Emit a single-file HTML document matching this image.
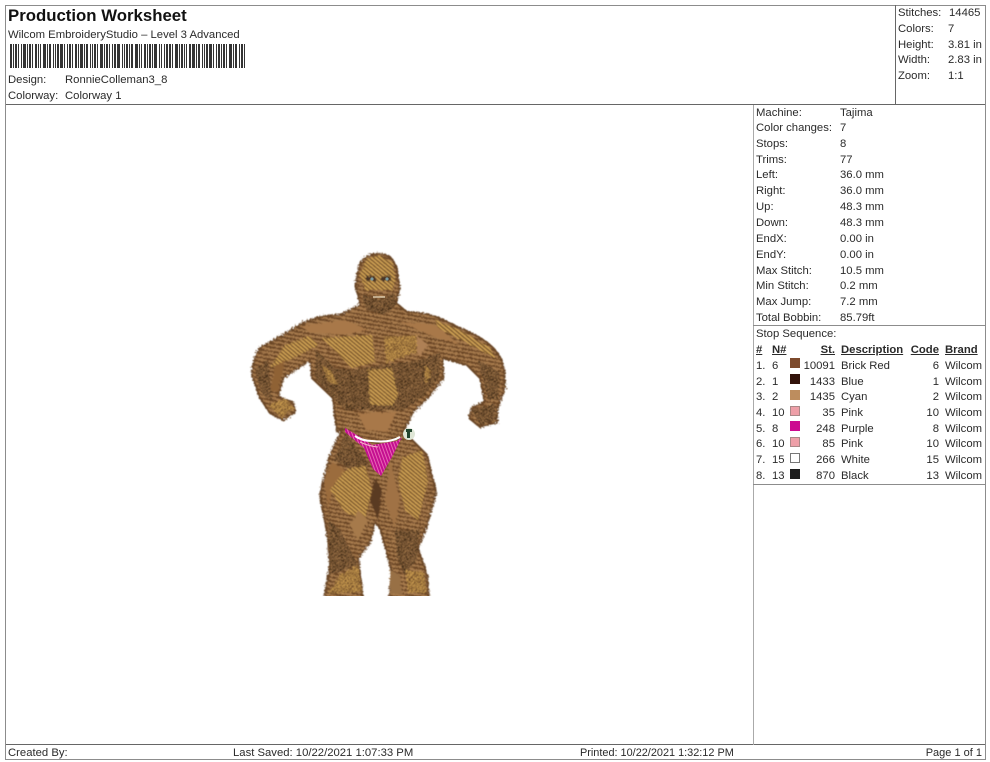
<!DOCTYPE html>
<html><head><meta charset="utf-8"><style>
html,body{margin:0;padding:0;background:#fff}
#p{position:relative;width:990px;height:762px;overflow:hidden;background:#fff;font:11.3px/18px "Liberation Sans",sans-serif;color:#2a2a2a;filter:blur(.3px)}
#p span{position:absolute;white-space:nowrap;margin-top:1px}
#p span.h{margin-top:0}
.l{position:absolute;background:#8c8c8c}
.r{text-align:right}
.u{font-weight:bold;text-decoration:underline}
.s{position:absolute;width:10px;height:10px;box-sizing:border-box}
svg{position:absolute;left:0;top:0}
</style></head><body><div id="p">
<div class="l" style="left:5px;top:5px;width:980px;height:1px"></div>
<div class="l" style="left:5px;top:104px;width:980px;height:1px;background:#666"></div>
<div class="l" style="left:5px;top:744px;width:980px;height:1px;background:#666"></div>
<div class="l" style="left:5px;top:759px;width:980px;height:1px"></div>
<div class="l" style="left:5px;top:5px;width:1px;height:755px"></div>
<div class="l" style="left:985px;top:5px;width:1px;height:755px"></div>
<div class="l" style="left:895px;top:5px;width:1px;height:100px;background:#666"></div>
<div class="l" style="left:753px;top:105px;width:1px;height:640px;background:#aaa"></div>
<div class="l" style="left:753px;top:325px;width:232px;height:1px"></div>
<div class="l" style="left:753px;top:484px;width:232px;height:1px"></div>

<span style="left:8px;top:5px;font:bold 16.8px/20px 'Liberation Sans',sans-serif;color:#111">Production Worksheet</span>
<span class="h" style="left:8px;top:26px">Wilcom EmbroideryStudio – Level 3 Advanced</span>
<svg width="260" height="75" style="left:0;top:0"><g stroke="#333" fill="none" stroke-width="24">
<line x1="10" y1="56" x2="245" y2="56" stroke-dasharray="2 1 1 1 2 1 1 2 1 1 3 1 1 1 2 1 1 2 2 1 1 1 1 2 3 1 1 1 2 2 1 1 1 1 2 1 3 1 1 2 1 1 2 1 1 2 2 1 1 1 3 1 1 1 2 2 1 1 1 1 2 1 1 2 3 1 1 1 2 1 1 2 1 1 2 1 3 2 1 1 1 1 2 1 1 1 2 2 3 1 1 1 1 2 2 1 1 1 2 1 1 1 3 2 1 1 1 2 1 1 2 1 2 1 1 2 3 1 1 1 2 1 1 1 1 2 2 1 3 1 1 1 2 2 1 1 1 1 2 1 3 1 1 2 1 1 2 1 1 1 2 1 1 2 3 1 1 1 2 2 1 1 2 1"/></g></svg>
<span class="h" style="left:8px;top:71px">Design:</span><span class="h" style="left:65px;top:71px">RonnieColleman3_8</span>
<span class="h" style="left:8px;top:87px">Colorway:</span><span class="h" style="left:65px;top:87px">Colorway 1</span>

<span style="left:898px;top:3px">Stitches:</span><span style="left:949px;top:3px">14465</span>
<span style="left:898px;top:19px">Colors:</span><span style="left:948px;top:19px">7</span>
<span style="left:898px;top:35px">Height:</span><span style="left:948px;top:35px">3.81 in</span>
<span style="left:898px;top:50px">Width:</span><span style="left:948px;top:50px">2.83 in</span>
<span style="left:898px;top:66px">Zoom:</span><span style="left:948px;top:66px">1:1</span>

<span style="left:756px;top:103px">Machine:</span><span style="left:840px;top:103px">Tajima</span>
<span style="left:756px;top:118px">Color changes:</span><span style="left:840px;top:118px">7</span>
<span style="left:756px;top:134px">Stops:</span><span style="left:840px;top:134px">8</span>
<span style="left:756px;top:150px">Trims:</span><span style="left:840px;top:150px">77</span>
<span style="left:756px;top:165px">Left:</span><span style="left:840px;top:165px">36.0 mm</span>
<span style="left:756px;top:181px">Right:</span><span style="left:840px;top:181px">36.0 mm</span>
<span style="left:756px;top:197px">Up:</span><span style="left:840px;top:197px">48.3 mm</span>
<span style="left:756px;top:213px">Down:</span><span style="left:840px;top:213px">48.3 mm</span>
<span style="left:756px;top:229px">EndX:</span><span style="left:840px;top:229px">0.00 in</span>
<span style="left:756px;top:245px">EndY:</span><span style="left:840px;top:245px">0.00 in</span>
<span style="left:756px;top:261px">Max Stitch:</span><span style="left:840px;top:261px">10.5 mm</span>
<span style="left:756px;top:276px">Min Stitch:</span><span style="left:840px;top:276px">0.2 mm</span>
<span style="left:756px;top:292px">Max Jump:</span><span style="left:840px;top:292px">7.2 mm</span>
<span style="left:756px;top:308px">Total Bobbin:</span><span style="left:840px;top:308px">85.79ft</span>
<span style="left:756px;top:324px">Stop Sequence:</span>

<span class="u" style="left:756px;top:340px">#</span><span class="u" style="left:772px;top:340px">N#</span><span class="u r" style="right:155px;top:340px">St.</span><span class="u" style="left:841px;top:340px">Description</span><span class="u r" style="right:51px;top:340px">Code</span><span class="u" style="left:945px;top:340px">Brand</span>

<span style="left:756px;top:356px">1.</span><span style="left:772px;top:356px">6</span><div class="s" style="left:790px;top:358px;background:#7d4a2c"></div><span class="r" style="right:155px;top:356px">10091</span><span style="left:841px;top:356px">Brick Red</span><span class="r" style="right:51px;top:356px">6</span><span style="left:945px;top:356px">Wilcom</span>
<span style="left:756px;top:372px">2.</span><span style="left:772px;top:372px">1</span><div class="s" style="left:790px;top:374px;background:#32120a"></div><span class="r" style="right:155px;top:372px">1433</span><span style="left:841px;top:372px">Blue</span><span class="r" style="right:51px;top:372px">1</span><span style="left:945px;top:372px">Wilcom</span>
<span style="left:756px;top:387px">3.</span><span style="left:772px;top:387px">2</span><div class="s" style="left:790px;top:390px;background:#bd8d5e"></div><span class="r" style="right:155px;top:387px">1435</span><span style="left:841px;top:387px">Cyan</span><span class="r" style="right:51px;top:387px">2</span><span style="left:945px;top:387px">Wilcom</span>
<span style="left:756px;top:403px">4.</span><span style="left:772px;top:403px">10</span><div class="s" style="left:790px;top:406px;background:#ee9fa8;border:1px solid #a88"></div><span class="r" style="right:155px;top:403px">35</span><span style="left:841px;top:403px">Pink</span><span class="r" style="right:51px;top:403px">10</span><span style="left:945px;top:403px">Wilcom</span>
<span style="left:756px;top:419px">5.</span><span style="left:772px;top:419px">8</span><div class="s" style="left:790px;top:421px;background:#cc0a90"></div><span class="r" style="right:155px;top:419px">248</span><span style="left:841px;top:419px">Purple</span><span class="r" style="right:51px;top:419px">8</span><span style="left:945px;top:419px">Wilcom</span>
<span style="left:756px;top:434px">6.</span><span style="left:772px;top:434px">10</span><div class="s" style="left:790px;top:437px;background:#ee9fa8;border:1px solid #a88"></div><span class="r" style="right:155px;top:434px">85</span><span style="left:841px;top:434px">Pink</span><span class="r" style="right:51px;top:434px">10</span><span style="left:945px;top:434px">Wilcom</span>
<span style="left:756px;top:450px">7.</span><span style="left:772px;top:450px">15</span><div class="s" style="left:790px;top:453px;background:#fff;border:1px solid #777"></div><span class="r" style="right:155px;top:450px">266</span><span style="left:841px;top:450px">White</span><span class="r" style="right:51px;top:450px">15</span><span style="left:945px;top:450px">Wilcom</span>
<span style="left:756px;top:466px">8.</span><span style="left:772px;top:466px">13</span><div class="s" style="left:790px;top:469px;background:#1c1c1c"></div><span class="r" style="right:155px;top:466px">870</span><span style="left:841px;top:466px">Black</span><span class="r" style="right:51px;top:466px">13</span><span style="left:945px;top:466px">Wilcom</span>

<span style="left:8px;top:743px">Created By:</span>
<span style="left:233px;top:743px">Last Saved: 10/22/2021 1:07:33 PM</span>
<span style="left:580px;top:743px;font-size:10.9px">Printed: 10/22/2021 1:32:12 PM</span>
<span class="r" style="right:8px;top:743px;font-size:11px">Page 1 of 1</span>

<svg width="990" height="762" viewBox="0 0 990 762">
<defs>
<pattern id="g" width="3" height="3" patternUnits="userSpaceOnUse" patternTransform="rotate(40)"><rect width="3" height="3" fill="#7f5a2e"/><rect width="3" height="1.5" fill="#cfa254"/></pattern>
<pattern id="g2" width="3" height="3" patternUnits="userSpaceOnUse" patternTransform="rotate(-50)"><rect width="3" height="3" fill="#74502a"/><rect width="3" height="1.5" fill="#c89a50"/></pattern>
<pattern id="d" width="3" height="3" patternUnits="userSpaceOnUse" patternTransform="rotate(-35)"><rect width="3" height="3" fill="#3f2a18"/><rect width="3" height="1.4" fill="#9a7044"/></pattern>
<pattern id="b" width="4" height="4" patternUnits="userSpaceOnUse" patternTransform="rotate(10)"><rect width="4" height="4" fill="#6c4626"/><rect width="4" height="2" fill="#a87c4e"/></pattern>
<pattern id="m" width="3" height="3" patternUnits="userSpaceOnUse" patternTransform="rotate(70)"><rect width="3" height="3" fill="#c40f90"/><rect width="3" height="1" fill="#e866b4"/></pattern>
<filter id="j" x="-5%" y="-5%" width="110%" height="110%"><feTurbulence type="fractalNoise" baseFrequency=".6" numOctaves="2" seed="4"/><feDisplacementMap in="SourceGraphic" scale="5"/><feGaussianBlur stdDeviation=".5"/></filter>
<clipPath id="c"><rect x="240" y="245" width="280" height="351"/></clipPath>
</defs>
<g clip-path="url(#c)"><g filter="url(#j)">
<path fill="url(#b)" stroke="#6a4628" stroke-width="2" stroke-linejoin="round" d="M365 258Q378 250 390 257Q398 265 398 280Q401 285 398 294L396 303L407 312Q425 313 437 317L460 328Q480 336 490 345Q502 355 504 370L505 388L497 408L497 422L480 427L469 418L473 407L485 402L480 378L467 365L443 358L443 378L430 395L413 412L403 432L407 435L427 455L436 492L427 525L418 548L427 575L429 600L389 600L392 572L380 528L375 522L370 542L358 558L363 600L324 600L330 565L327 532L320 495L330 455L343 428L337 432L333 398L312 378L310 360L283 378L278 397L293 402L295 412L283 420L270 413L260 398L252 375Q253 358 260 348L283 335L303 323Q320 315 340 315L360 305L358 294Q354 285 357 280Q357 265 365 258Z"/>
<!-- head -->
<path fill="url(#g)" d="M366 259L378 255L392 262L396 280L392 290L365 290L360 275Z"/>
<path fill="url(#d)" d="M362 294L380 300L394 292L396 305L385 315L366 310Z"/>
<path fill="#4a3626" d="M366 276L376 276L376 281L366 281ZM381 276L391 276L391 281L381 281Z"/>
<!-- shoulders/arms -->
<path fill="url(#g)" d="M435 320L460 330L490 348L495 358L465 342L438 328Z"/>
<path fill="url(#g)" d="M285 345L310 336L318 345L290 360L270 368Z"/>
<path fill="#a87848" d="M300 326L345 320L368 330L345 335L310 332Z"/>
<path fill="#a87848" d="M400 322L435 325L460 345L430 335Z"/>
<path fill="url(#d)" d="M255 370L268 360L272 400L262 395Z"/>
<path fill="#8f6236" d="M275 365L285 360L278 392L270 390Z"/>
<path fill="url(#d)" d="M478 360L500 372L498 400L488 400Z"/>
<path fill="url(#g2)" d="M268 405L285 398L294 408L282 418Z"/>
<path fill="url(#d)" d="M472 410L495 404L496 420L480 425Z"/>
<!-- chest -->
<path fill="url(#d)" d="M316 350L335 368L352 370L375 366L420 360L440 352L440 375L425 395L405 410L345 410L330 395L315 378Z"/>
<path fill="url(#g)" d="M322 338L372 335L375 362L352 368Z"/>
<path fill="url(#g2)" d="M384 337L417 335L417 352L386 363Z"/>
<path fill="#ae8054" d="M417 336L428 345L420 356L417 352Z"/>
<path fill="url(#g)" d="M368 370L392 368L398 395L392 405L370 405Z"/>
<path fill="url(#g2)" d="M322 365L332 372L338 385L328 382Z"/>
<path fill="url(#g2)" d="M425 365L432 372L425 385Z"/>
<path fill="#a87848" d="M358 413L396 412L388 432L366 430Z"/>
<!-- legs -->
<path fill="url(#d)" d="M345 432L370 465L360 475L334 460Z"/>
<path fill="#9b6c3e" d="M324 480L332 462L345 470L332 490L328 510Z"/>
<path fill="url(#g)" d="M365 465L372 490L365 520L345 512L330 490L345 470Z"/>
<path fill="#a67a4c" d="M358 510L368 520L358 540L350 525Z"/>
<path fill="url(#d)" d="M328 520L340 530L358 565L330 575Z"/>
<path fill="url(#g2)" d="M340 575L358 565L362 592L328 594Z"/>
<path fill="#5a3a20" d="M375 478L382 490L378 520L370 500Z"/>
<path fill="#a07244" d="M390 460L400 500L395 528L385 500Z"/>
<path fill="url(#g)" d="M402 458L422 450L428 480L418 520L405 510L398 480Z"/>
<path fill="url(#d)" d="M395 530L420 530L417 560L405 575L398 560Z"/>
<path fill="#987044" d="M390 570L400 575L402 594L390 594Z"/>
<path fill="url(#g2)" d="M405 570L424 572L427 593L408 593Z"/>
</g>
<!-- thong -->
<path fill="url(#m)" d="M345 428L362 438L372 445L397 441L402 437L392 457L381 476L373 469L364 448L345 432Z"/>
<path fill="none" stroke="#fff" stroke-width="2" d="M355 436Q362 441 372 441Q390 443 400 437"/>
<path fill="none" stroke="#f3b4c6" stroke-width="1" d="M360 442Q368 446 378 447"/>
<circle cx="409" cy="434" r="6" fill="#dfe6d6"/>
<path fill="#23452e" d="M406 429h6v3h-2v6h-3v-6h-1z"/>
<circle cx="372" cy="279" r="1.6" fill="#7a9aa0"/><circle cx="387" cy="279" r="1.6" fill="#7a9aa0"/>
<path fill="none" stroke="#f0e4c8" stroke-width="1.2" d="M373 297L385 297"/>
</g></svg>
</div></body></html>
